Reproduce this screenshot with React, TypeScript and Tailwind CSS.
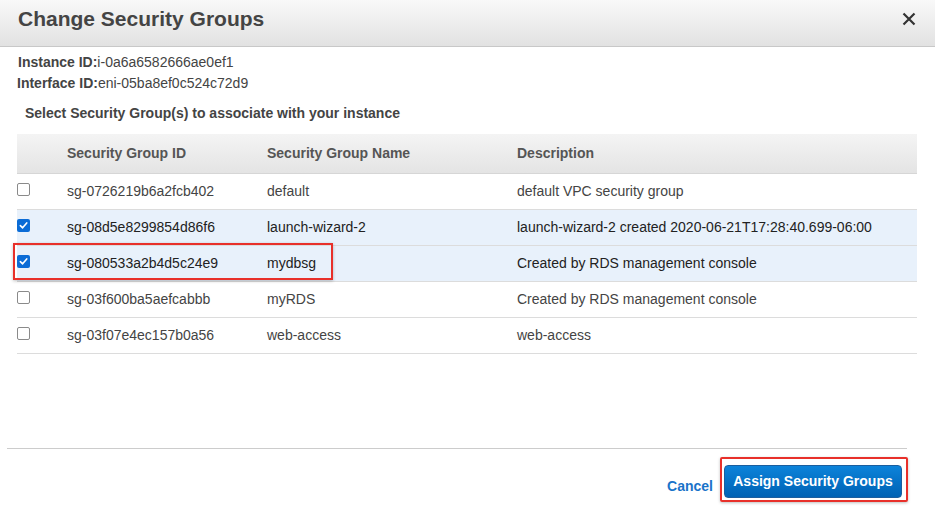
const rows = [
  { id: "sg-0726219b6a2fcb402", name: "default", desc: "default VPC security group", checked: false },
  { id: "sg-08d5e8299854d86f6", name: "launch-wizard-2", desc: "launch-wizard-2 created 2020-06-21T17:28:40.699-06:00", checked: true },
  { id: "sg-080533a2b4d5c24e9", name: "mydbsg", desc: "Created by RDS management console", checked: true },
  { id: "sg-03f600ba5aefcabbb", name: "myRDS", desc: "Created by RDS management console", checked: false },
  { id: "sg-03f07e4ec157b0a56", name: "web-access", desc: "web-access", checked: false },
];

function Checkbox({ checked }: { checked: boolean }) {
  if (checked) {
    return (
      <span className="flex h-[13px] w-[13px] items-center justify-center rounded-[2px] bg-[#0b6cd6]">
        <svg width="9" height="9" viewBox="0 0 10 10" fill="none">
          <path d="M1.5 5.2 L4 7.6 L8.6 2.2" stroke="white" strokeWidth="1.8" strokeLinecap="round" strokeLinejoin="round" />
        </svg>
      </span>
    );
  }
  return <span className="block h-[13px] w-[13px] rounded-[2px] border border-[#8a8a8a] bg-white" />;
}

export default function App() {
  return (
    <div
      className="relative h-[514px] w-[935px] overflow-hidden bg-white text-[#444]"
      style={{ fontFamily: '"Liberation Sans", Arial, sans-serif' }}
    >
      {/* header */}
      <div className="flex h-[47px] items-center justify-between border-b border-[#c8c8c8] bg-gradient-to-b from-[#f9f9f9] to-[#e2e2e2] pb-[8px] pl-[18px] pr-[19px]">
        <h1 className="text-[21px] font-bold text-[#444]">Change Security Groups</h1>
        <svg width="14" height="14" viewBox="0 0 14 14">
          <path d="M1.5 1.5 L12.5 12.5 M12.5 1.5 L1.5 12.5" stroke="#333" strokeWidth="2.2" />
        </svg>
      </div>

      {/* ids */}
      <div className="pl-[18px] pt-[5px] text-[14px] leading-[21px]">
        <div>
          <span className="font-bold">Instance ID:</span>i-0a6a6582666ae0ef1
        </div>
        <div className="-ml-px">
          <span className="font-bold">Interface ID:</span>eni-05ba8ef0c524c72d9
        </div>
      </div>
      <div className="pl-[25px] pt-[9px] text-[14px] font-bold leading-[20px]">
        Select Security Group(s) to associate with your instance
      </div>

      {/* table */}
      <div className="ml-[17px] mt-[11px] w-[900px] text-[14px]">
        <div className="grid h-[40px] grid-cols-[50px_200px_250px_1fr] items-center border-b border-[#d6d6d6] bg-gradient-to-b from-[#f4f4f4] to-[#e4e4e4] font-bold text-[#555]">
          <span />
          <span>Security Group ID</span>
          <span>Security Group Name</span>
          <span>Description</span>
        </div>
        {rows.map((r) => (
          <div
            key={r.id}
            className={
              "grid h-[36px] grid-cols-[50px_200px_250px_1fr] items-center border-b border-[#dcdcdc] " +
              (r.checked ? "bg-[#e8f1fb] text-[#222]" : "bg-white text-[#444]")
            }
          >
            <span className="-mt-[5px]">
              <Checkbox checked={r.checked} />
            </span>
            <span>{r.id}</span>
            <span>{r.name}</span>
            <span>{r.desc}</span>
          </div>
        ))}
      </div>

      {/* highlight around mydbsg row */}
      <div className="pointer-events-none absolute left-[13px] top-[243px] h-[37px] w-[320px] border-2 border-[#e8302a] shadow-[0_1px_3px_rgba(0,0,0,0.25)]" />

      {/* footer */}
      <div className="ml-[7px] mt-[94px] w-[900px] border-t border-[#cccccc]" />
      <div className="flex items-center justify-end gap-[7px] pr-[27px] pt-[8px]">
        <button className="pt-[13px] text-[14px] font-bold text-[#1a73c9]">Cancel</button>
        <div className="rounded-[2px] border-2 border-[#e8302a] pb-[2px] pl-[2px] pr-[4px] pt-[6px] shadow-[0_1px_3px_rgba(0,0,0,0.25)]">
          <button className="flex h-[33px] w-[178px] items-center justify-center rounded-[4px] border border-[#1b5e9e] bg-gradient-to-b from-[#0d83da] to-[#0062b4] text-[14px] font-bold text-white">
            Assign Security Groups
          </button>
        </div>
      </div>
    </div>
  );
}
